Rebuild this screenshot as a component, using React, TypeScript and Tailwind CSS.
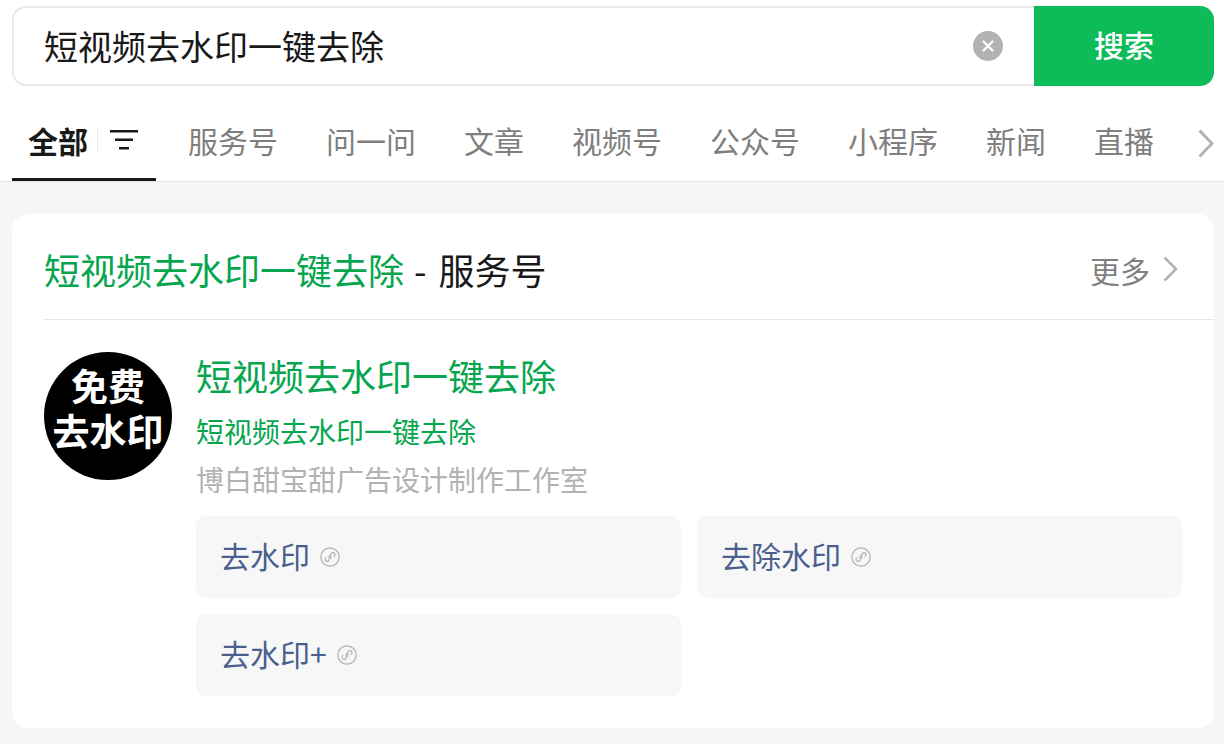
const tabs = ["服务号", "问一问", "文章", "视频号", "公众号", "小程序", "新闻", "直播"]

function Chevron({ width, height, stroke }: { width: number; height: number; stroke: number }) {
    return (
        <svg width={width} height={height} viewBox={`0 0 ${width} ${height}`} fill="none" stroke="#b2b2b2" strokeWidth={stroke} className="shrink-0">
            <path d={`M1.500 1.500L${width - 2} ${height / 2}L1.500 ${height - 1.500}`} />
        </svg>
    )
}

function MiniIcon() {
    return (
        <svg width="20" height="20" viewBox="0 0 20 20" fill="none" stroke="#b2b2b2" strokeWidth="1.200" className="shrink-0">
            <circle cx="10" cy="10" r="9.200" />
            <path d="M9.200 7.900v4.300c0 1.300-1 2.200-2.100 2.200s-2.100-.9-2.100-2.100c0-.9.600-1.700 1.400-2M10.800 12.100V7.800c0-1.300 1-2.200 2.100-2.200S15 6.500 15 7.700c0 .9-.6 1.700-1.400 2" />
        </svg>
    )
}

function LinkButton({ label }: { label: string }) {
    return (
        <div className="h-[82px] bg-[#f7f7f7] rounded-[10px] pl-[24px] flex items-center gap-[10px]">
            <span className="text-[30px] leading-none text-[#4a5f8e] pb-[4px]">{label}</span>
            <MiniIcon />
        </div>
    )
}

export default function App() {
    return (
        <div className="w-[1224px] h-[744px] overflow-hidden bg-[#f6f6f6] font-['Noto_Sans_CJK_SC','Liberation_Sans',sans-serif]">
            <div className="bg-white border-b border-[#e5e5e5]">
                <div className="pt-[6px] pl-3 pr-[10px] flex h-[86px]">
                    <div className="flex-1 flex items-center justify-between border-2 border-r-0 border-[#e9e9e9] rounded-l-[14px] pl-[30px] pr-[31px]">
                        <span className="text-[34px] leading-none text-[#191919] pb-[1px]">短视频去水印一键去除</span>
                        <div className="w-[30px] h-[30px] rounded-full bg-[#b2b2b2] flex items-center justify-center">
                            <svg width="14" height="14" viewBox="0 0 14 14" stroke="#fff" strokeWidth="2.400" strokeLinecap="round">
                                <path d="M2.500 2.500l9 9M11.500 2.500l-9 9" />
                            </svg>
                        </div>
                    </div>
                    <div className="w-[180px] bg-[#0dbb58] rounded-r-[14px] flex items-center justify-center text-white text-[30px] font-medium leading-none pb-[4px]">
                        搜索
                    </div>
                </div>

                <div className="h-[95px] pl-3 pr-[10px] flex items-center">
                    <div className="w-[144px] h-full relative flex items-center pl-[16px] mr-[32px] pt-[30px] pb-[18px]">
                        <span className="text-[30px] font-bold leading-none text-[#191919]">全部</span>
                        <span className="w-px h-[24px] bg-[#ececec] ml-[9px] mr-[12px]" />
                        <svg width="28" height="20" viewBox="0 0 28 20" fill="#191919">
                            <rect x="0" y="0" width="28" height="2.500" />
                            <rect x="5" y="8.500" width="18" height="2.500" />
                            <rect x="9" y="17" width="10" height="2.500" />
                        </svg>
                        <div className="absolute left-0 right-0 bottom-0 h-[3px] bg-[#191919]" />
                    </div>
                    <div className="flex-1 flex items-center gap-[48px] mt-3">
                        {tabs.map((tab) => (
                            <span key={tab} className="text-[30px] leading-none text-[#7f7f7f] whitespace-nowrap">
                                {tab}
                            </span>
                        ))}
                    </div>
                    <div className="flex mt-[19px]">
                        <Chevron width={16} height={29} stroke={3} />
                    </div>
                </div>
            </div>

            <div className="mt-8 ml-3 mr-[10px] bg-white rounded-2xl h-[514px] pl-8">
                <div className="h-[106px] flex items-center justify-between border-b border-[#e5e5e5] pr-[36px] pt-[4px]">
                    <div className="text-[36px] leading-none text-[#191919]">
                        <span className="text-[#06a64f]">短视频去水印一键去除</span>
                        <span className="ml-[10px] mr-[12px]">-</span>服务号
                    </div>
                    <div className="flex items-center gap-[13px]">
                        <span className="text-[30px] leading-none text-[#7f7f7f] pt-[2px]">更多</span>
                        <Chevron width={15} height={26} stroke={2.500} />
                    </div>
                </div>

                <div className="flex pt-8 pr-8 gap-6">
                    <div className="w-32 h-32 shrink-0 rounded-full bg-black flex flex-col items-center justify-center text-white font-bold leading-none pb-[16px]">
                        <span className="text-[37px] leading-[45px]">免费</span>
                        <span className="text-[37px] leading-[45px]">去水印</span>
                    </div>
                    <div className="flex-1 -mt-[2px]">
                        <div className="text-[36px] leading-[50px] text-[#06a64f]">短视频去水印一键去除</div>
                        <div className="text-[28px] leading-[40px] mt-[11px] text-[#06a64f]">短视频去水印一键去除</div>
                        <div className="text-[28px] leading-[40px] mt-2 text-[#b2b2b2]">博白甜宝甜广告设计制作工作室</div>
                        <div className="grid grid-cols-2 gap-4 mt-[17px]">
                            <LinkButton label="去水印" />
                            <LinkButton label="去除水印" />
                            <LinkButton label="去水印+" />
                        </div>
                    </div>
                </div>
            </div>
        </div>
    )
}
